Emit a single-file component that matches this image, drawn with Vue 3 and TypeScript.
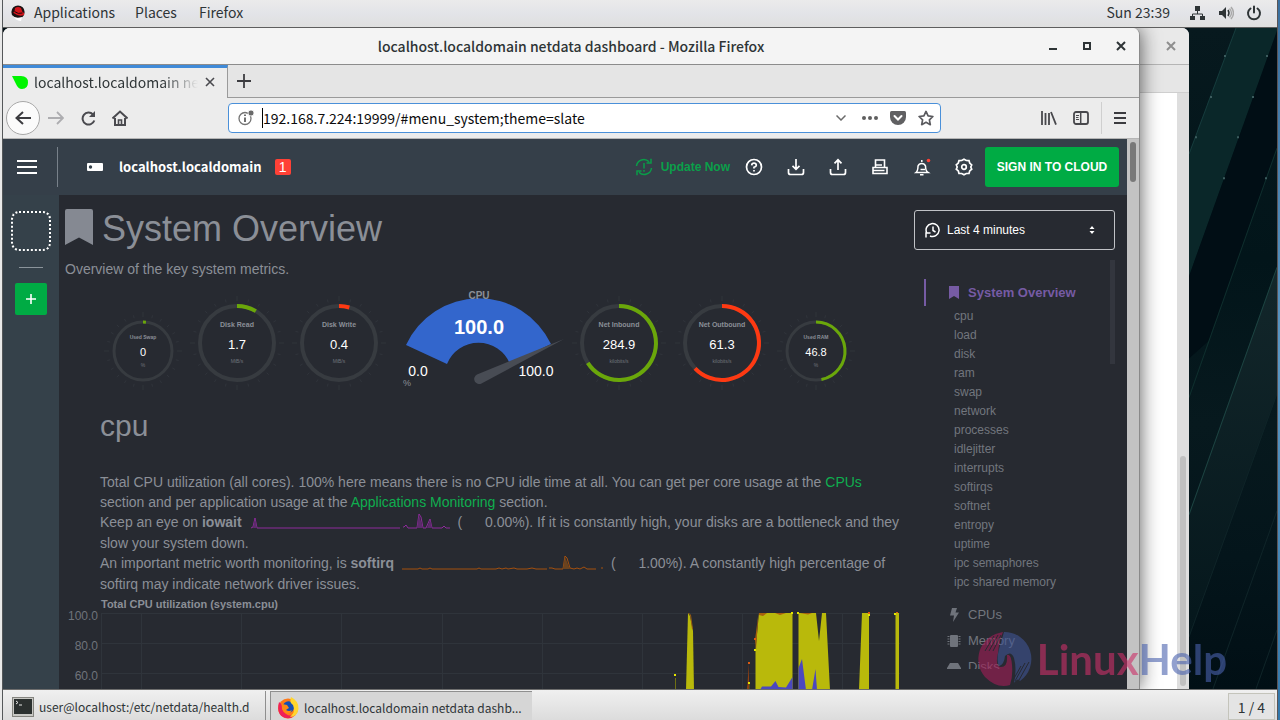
<script setup lang="ts">
import { ref } from 'vue'

interface Gauge {
  label: string
  value: string
  unit: string
  percent: number
  color: string
  radius: number
  width: number
}

const leftGauges: Gauge[] = [
  { label: 'Used Swap', value: '0', unit: '%', percent: 1.6, color: '#6aa70a', radius: 29, width: 86 },
  { label: 'Disk Read', value: '1.7', unit: 'MiB/s', percent: 8.5, color: '#6aa70a', radius: 37, width: 102 },
  { label: 'Disk Write', value: '0.4', unit: 'MiB/s', percent: 4.5, color: '#fe3912', radius: 37, width: 102 },
]
const rightGauges: Gauge[] = [
  { label: 'Net Inbound', value: '284.9', unit: 'kilobits/s', percent: 66, color: '#6aa70a', radius: 37, width: 102 },
  { label: 'Net Outbound', value: '61.3', unit: 'kilobits/s', percent: 63, color: '#fe3912', radius: 37, width: 104 },
  { label: 'Used RAM', value: '46.8', unit: '%', percent: 47, color: '#6aa70a', radius: 29, width: 84 },
]

const menuItems = [
  'cpu', 'load', 'disk', 'ram', 'swap', 'network', 'processes', 'idlejitter', 'interrupts',
  'softirqs', 'softnet', 'entropy', 'uptime', 'ipc semaphores', 'ipc shared memory',
]

const address = ref('192.168.7.224:19999/#menu_system;theme=slate')
const range = ref('Last 4 minutes')

const gaugeBottom = 94
const cy = (g: Gauge) => gaugeBottom - g.radius - 1

function arc(g: Gauge): string {
  const angle = (g.percent / 100) * Math.PI * 2
  const x = g.width / 2 + g.radius * Math.sin(angle)
  const y = cy(g) - g.radius * Math.cos(angle)
  return `M${g.width / 2} ${cy(g) - g.radius} A${g.radius} ${g.radius} 0 ${g.percent > 50 ? 1 : 0} 1 ${x.toFixed(2)} ${y.toFixed(2)}`
}

function ticks(g: Gauge): string {
  let d = ''
  for (let i = 0; i < 24; i++) {
    const a = (i * Math.PI) / 12
    const r1 = g.radius + 5
    const r2 = g.radius + (i % 6 === 0 ? 10 : 8)
    d += `M${(g.width / 2 + r1 * Math.sin(a)).toFixed(1)} ${(cy(g) - r1 * Math.cos(a)).toFixed(1)}L${(g.width / 2 + r2 * Math.sin(a)).toFixed(1)} ${(cy(g) - r2 * Math.cos(a)).toFixed(1)}`
  }
  return d
}
</script>

<template>
  <div class="screen">
    <div class="edge-left"></div>
    <div class="desktop">
      <header class="topbar">
        <nav class="topmenu">
          <svg class="hat" width="16" height="16" viewBox="0 0 16 16">
            <circle cx="8" cy="7" r="6.6" fill="#1b1212" />
            <path d="M2 10 Q5 14 12 12 L11 16 Q5 15.500 2 10z" fill="#fff" />
            <path d="M5 3 Q8 1 11 3 L12.500 7 Q15 8 14 10 Q9 12 3.500 8 Q3 6.500 4.500 6.500z" fill="#d3151c" />
            <path d="M4.500 6.500 Q8 9.500 12.500 8" stroke="#220808" fill="none" stroke-width="1" />
          </svg>
          <a href="#applications">Applications</a>
          <a href="#places">Places</a>
          <a href="#firefox">Firefox</a>
        </nav>
        <div class="status">
          <time>Sun 23:39</time>
          <svg width="16" height="16" viewBox="0 0 16 16" fill="#2e3436">
            <path d="M5 1h5v5H5zM0 11h5v4H0zM10 11h5v4h-5z" />
            <path d="M7.500 6v3M2.500 11V9h10v2" stroke="#2e3436" fill="none" />
          </svg>
          <svg width="16" height="16" viewBox="0 0 16 16">
            <path d="M1 6h3l4-4v12l-4-4H1z" fill="#2e3436" />
            <path d="M10 5q2 3 0 6" stroke="#2e3436" stroke-width="1.500" fill="none" />
            <path d="M11.500 3.500q4 4.500 0 9M13 2q5 6 0 12" stroke="#a9a9a9" stroke-width="1.400" fill="none" />
          </svg>
          <svg width="16" height="16" viewBox="0 0 16 16" stroke="#2e3436" fill="none" stroke-width="2" stroke-linecap="round">
            <path d="M4.500 3.500a6 6 0 1 0 7 0M8 1.500v6" />
          </svg>
        </div>
      </header>

      <main class="workspace">
        <svg class="wallpaper" viewBox="0 0 88 660" preserveAspectRatio="none">
          <defs>
            <linearGradient id="wall" x1="0" y1="0" x2="0" y2="1">
              <stop offset="0" stop-color="#07191e" />
              <stop offset=".35" stop-color="#02151a" />
              <stop offset=".6" stop-color="#07191e" />
              <stop offset=".8" stop-color="#04151b" />
              <stop offset="1" stop-color="#010f15" />
            </linearGradient>
            <linearGradient id="glow" x1="0" y1="0" x2="0" y2="1">
              <stop offset="0" stop-color="#13272b" />
              <stop offset="1" stop-color="#05171c" />
            </linearGradient>
          </defs>
          <rect width="88" height="660" fill="url(#wall)" />
          <path d="M47 0H88V3L0 248V126z" fill="#0a2729" />
          <path d="M88 3V120L20 312L0 330V248z" fill="#010e15" />
          <path d="M88 239V365L0 608V486z" fill="url(#glow)" />
          <path d="M47 0L0 126" stroke="#163c3d" fill="none" />
          <path d="M88 120L0 369" stroke="#0f2f2e" fill="none" />
          <path d="M88 239L0 486" stroke="#1d4442" fill="none" />
          <path d="M88 365L0 608M88 482L24 660M88 601L67 660" stroke="#0f2428" fill="none" />
          <path d="M35 27h2v2h-2zM77 27h2v2h-2zM21 68h2v2h-2zM63 68h2v2h-2zM6 108h2v2H6zM48 108h2v2h-2zM34 149h2v2h-2zM76 149h2v2h-2z" fill="#3c5c5e" />
        </svg>

        <section class="window back">
          <div class="titlebar">
            <svg width="10" height="10" viewBox="0 0 10 10"><path d="M1 1l8 8M9 1l-8 8" stroke="#8e8e8e" stroke-width="2" /></svg>
          </div>
          <div class="back-strip"></div>
          <div class="back-page"><div class="back-scroll"><div class="back-thumb"></div></div></div>
        </section>

        <section class="window front">
          <div class="titlebar">
            <h1 class="wintitle">localhost.localdomain netdata dashboard - Mozilla Firefox</h1>
            <div class="winbuttons">
              <button aria-label="Minimize"><svg width="10" height="10" viewBox="0 0 10 10"><path d="M1 8h8" stroke="#2e3436" stroke-width="2" /></svg></button>
              <button aria-label="Maximize"><svg width="10" height="10" viewBox="0 0 10 10"><path d="M2 2h6v6H2z" stroke="#2e3436" stroke-width="2" fill="none" /></svg></button>
              <button aria-label="Close"><svg width="10" height="10" viewBox="0 0 10 10"><path d="M1 1l8 8M9 1l-8 8" stroke="#2e3436" stroke-width="2" /></svg></button>
            </div>
          </div>

          <div class="tabs">
            <div class="tab">
              <svg width="16" height="14" viewBox="0 0 16 14"><path d="M0 1h9q7 0 7 6.500T10 14Q6 14 4 9z" fill="#00f500" /></svg>
              <span class="tabtext">localhost.localdomain netdata dashboard</span>
              <button aria-label="Close tab"><svg width="10" height="10" viewBox="0 0 10 10"><path d="M1 1l8 8M9 1l-8 8" stroke="#4a4a4f" stroke-width="1.600" /></svg></button>
            </div>
            <div class="tabrest">
              <button aria-label="New tab"><svg width="14" height="14" viewBox="0 0 14 14"><path d="M7 0v14M0 7h14" stroke="#3c3c40" stroke-width="1.800" /></svg></button>
            </div>
          </div>

          <div class="navbar">
            <div class="navleft">
              <button class="backbtn" aria-label="Back"><svg width="16" height="14" viewBox="0 0 16 14" fill="none" stroke="#3c3c40" stroke-width="2"><path d="M16 7H1.500M8 1L1.500 7L8 13" /></svg></button>
              <button aria-label="Forward"><svg width="16" height="14" viewBox="0 0 16 14" fill="none" stroke="#adadb0" stroke-width="1.800"><path d="M0 7h14.500M9 1l6 6-6 6" /></svg></button>
              <button aria-label="Reload"><svg width="16" height="16" viewBox="0 0 16 16" fill="none" stroke="#4a4a4f" stroke-width="2"><path d="M14.300 10.500A6 6 0 1 1 13 4.500" /><path d="M15 1v6H9z" fill="#4a4a4f" stroke="none" /></svg></button>
              <button aria-label="Home"><svg width="16" height="16" viewBox="0 0 16 16" fill="none" stroke="#4a4a4f" stroke-width="2"><path d="M0.500 8.500L8 1.500l7.500 7M3 8v7h10V8" /><path d="M6.500 15v-5h3v5" stroke-width="1.600" /></svg></button>
            </div>
            <div class="urlbar">
              <svg width="17" height="16" viewBox="0 0 17 16"><circle cx="7" cy="8.500" r="6" fill="none" stroke="#737373" stroke-width="1.300" /><path d="M7 7.500v4.500M7 4.500v1.600" stroke="#5f5f5f" stroke-width="1.800" /><circle cx="13" cy="3" r="3" fill="#6a6a6a" stroke="#fff" stroke-width=".8" /></svg>
              <span class="caret"></span>
              <input v-model="address" type="text" aria-label="Address" />
              <svg width="10" height="6" viewBox="0 0 10 6"><path d="M.500.500L5 5L9.500.500" fill="none" stroke="#6b6b6b" stroke-width="1.500" /></svg>
              <svg class="dots" width="16" height="4" viewBox="0 0 16 4" fill="#5f5f5f"><circle cx="2" cy="2" r="2" /><circle cx="8" cy="2" r="2" /><circle cx="14" cy="2" r="2" /></svg>
              <svg width="16" height="14" viewBox="0 0 16 14"><path d="M1.500 0h13Q16 0 16 1.500V6a8 8 0 0 1-16 0V1.500Q0 0 1.500 0z" fill="#606062" /><path d="M4.500 5l3.500 3.500L11.500 5" fill="none" stroke="#fff" stroke-width="2" stroke-linecap="round" /></svg>
              <svg width="16" height="16" viewBox="0 0 16 16"><path d="M8 1.400l2.100 4.500 4.800.6-3.500 3.400.9 4.800L8 12.300l-4.300 2.400.9-4.800L1.100 6.500l4.800-.6z" fill="none" stroke="#5a5a5e" stroke-width="1.700" stroke-linejoin="round" /></svg>
            </div>
            <div class="navright">
              <button aria-label="Library"><svg width="16" height="14" viewBox="0 0 16 14" stroke="#48484c" stroke-width="1.800" fill="none"><path d="M1 0v14M4.500 2v12M8 2v12M10 1l5 12.600" /></svg></button>
              <button aria-label="Sidebar"><svg width="16" height="14" viewBox="0 0 16 14" stroke="#48484c" fill="none"><rect x="1" y="1" width="14" height="12" rx="2" stroke-width="1.800" /><path d="M7.700 1v12" stroke-width="1.500" /><path d="M3 4.500h3M3 6.500h2.500M3 8.500h3" /></svg></button>
              <span class="navsep"></span>
              <button aria-label="Menu"><svg width="12" height="12" viewBox="0 0 12 12"><path d="M0 1h12M0 6h12M0 11h12" stroke="#3c3c40" stroke-width="2" /></svg></button>
            </div>
          </div>

          <div class="page">
            <div class="site">
              <header class="sitehead">
                <button class="burger" aria-label="Toggle spaces"><svg width="20" height="14" viewBox="0 0 20 14"><path d="M0 1h20M0 7h20M0 13h20" stroke="#fff" stroke-width="2" /></svg></button>
                <span class="vline"></span>
                <svg class="node" width="16" height="8" viewBox="0 0 16 8"><rect width="16" height="8" rx="1" fill="#fff" /><circle cx="3.500" cy="4" r="1.700" fill="#35414a" /></svg>
                <strong class="host">localhost.localdomain</strong>
                <span class="alarm">1</span>
                <div class="tools">
                  <a class="update" href="#update">
                    <svg width="18" height="18" viewBox="0 0 18 18" fill="none" stroke="#0a9c48" stroke-width="1.500"><path d="M1.500 8A7.300 7.300 0 0 1 14 3.800M16.500 10A7.300 7.300 0 0 1 4 14.200M16 .8V5h-4.500M2 17.200V13h4.500M9 5v5.500M9 12v1.800" /></svg>
                    Update Now
                  </a>
                  <button aria-label="Help"><svg viewBox="0 0 18 18"><circle cx="9" cy="9" r="7.500" /><path d="M6.700 7.300Q6.900 5.200 9 5.200t2.300 2Q11.300 8.500 9 9.300V10.600M9 12v1.600" /></svg></button>
                  <button aria-label="Import"><svg viewBox="0 0 18 18"><path d="M9 1v10M5.500 7.800L9 11.300l3.500-3.500M1.500 11v3.500q0 2 2 2h11q2 0 2-2V11" /></svg></button>
                  <button aria-label="Export"><svg viewBox="0 0 18 18"><path d="M9 12V2M5.500 5.300L9 1.800l3.500 3.500M1.500 11v3.500q0 2 2 2h11q2 0 2-2V11" /></svg></button>
                  <button aria-label="Print"><svg viewBox="0 0 18 18"><path d="M4.500 9.500V2h9v7.500M4.500 7H11M2 15.500V9.500h14v6zM2 12.500h11.500" stroke-width="1.600" /></svg></button>
                  <button aria-label="Alarms"><svg viewBox="0 0 18 18"><path d="M3 14.500q2-1.500 2-6.500a4 4 0 0 1 7.500 0q0 5 2.500 6.500zM7 16.800h3.500M8.800 2v2M7.500 11.500h4.500" stroke-width="1.500" /><circle cx="15.500" cy="2.500" r="1.800" fill="#ff4136" stroke="none" /></svg></button>
                  <button aria-label="Settings"><svg viewBox="0 0 18 18"><path d="M9 1.200l2.300 1.300 2.700.1.700 2.500 2 1.800L15.800 9l.9 2.200-2 1.700-.7 2.500-2.700.1L9 16.800l-2.300-1.300-2.700-.1-.7-2.500-2-1.700L2.200 9l-.9-2.200 2-1.700.7-2.500 2.700-.1z" /><circle cx="9" cy="9" r="2.300" /></svg></button>
                </div>
                <button class="signin">SIGN IN TO CLOUD</button>
              </header>

              <div class="sitebody">
                <aside class="spaces">
                  <div class="space"></div>
                  <div class="rule"></div>
                  <button class="plus" aria-label="Add space"><svg width="10" height="10" viewBox="0 0 10 10"><path d="M5 0v10M0 5h10" stroke="#fff" stroke-width="1.600" /></svg></button>
                </aside>

                <article class="content">
                  <h2 class="overview">
                    <svg width="28" height="36" viewBox="0 0 28 36"><path d="M2 0h24q2 0 2 2v34L14 28.500L0 36V2Q0 0 2 0z" fill="#858992" /></svg>
                    System Overview
                  </h2>
                  <p class="lead">Overview of the key system metrics.</p>

                  <div class="gauges">
                    <svg v-for="g in leftGauges" :key="g.label" :width="g.width" height="106" :viewBox="`0 0 ${g.width} 106`">
                      <path :d="ticks(g)" stroke="#30343b" />
                      <circle :cx="g.width / 2" :cy="cy(g)" :r="g.radius" fill="none" stroke="#373b40" :stroke-width="g.radius > 30 ? 4 : 3" />
                      <path :d="arc(g)" fill="none" :stroke="g.color" :stroke-width="g.radius > 30 ? 4 : 3" />
                      <text :x="g.width / 2" :y="cy(g) - (g.radius > 30 ? 16 : 12)" class="glabel" :class="{ small: g.radius < 30 }">{{ g.label }}</text>
                      <text :x="g.width / 2" :y="cy(g) + (g.radius > 30 ? 6 : 5)" class="gvalue" :class="{ small: g.radius < 30 }">{{ g.value }}</text>
                      <text :x="g.width / 2" :y="cy(g) + (g.radius > 30 ? 20 : 16)" class="gunit">{{ g.unit }}</text>
                    </svg>
                    <svg width="178" height="106" viewBox="0 0 178 106">
                      <path d="M16 58A80 80 0 0 1 161 57L120 77A34 34 0 0 0 57 77z" fill="#3366cc" />
                      <path d="M91.500 96.500L174 52L87 87.500A5 5 0 1 0 91.500 96.500z" fill="#484c54" />
                      <text x="89" y="12" class="ctitle">CPU</text>
                      <text x="89" y="47" class="cvalue">100.0</text>
                      <text x="28" y="89" class="cedge">0.0</text>
                      <text x="146" y="89" class="cedge">100.0</text>
                      <text x="17" y="99" class="cunit">%</text>
                    </svg>
                    <svg v-for="g in rightGauges" :key="g.label" :width="g.width" height="106" :viewBox="`0 0 ${g.width} 106`">
                      <path :d="ticks(g)" stroke="#30343b" />
                      <circle :cx="g.width / 2" :cy="cy(g)" :r="g.radius" fill="none" stroke="#373b40" :stroke-width="g.radius > 30 ? 4 : 3" />
                      <path :d="arc(g)" fill="none" :stroke="g.color" :stroke-width="g.radius > 30 ? 4 : 3" />
                      <text :x="g.width / 2" :y="cy(g) - (g.radius > 30 ? 16 : 12)" class="glabel" :class="{ small: g.radius < 30 }">{{ g.label }}</text>
                      <text :x="g.width / 2" :y="cy(g) + (g.radius > 30 ? 6 : 5)" class="gvalue" :class="{ small: g.radius < 30 }">{{ g.value }}</text>
                      <text :x="g.width / 2" :y="cy(g) + (g.radius > 30 ? 20 : 16)" class="gunit">{{ g.unit }}</text>
                    </svg>
                  </div>

                  <h3 class="cpu">cpu</h3>
                  <p class="about">
                    Total CPU utilization (all cores). 100% here means there is no CPU idle time at all. You can get per core usage at the <a href="#cpus">CPUs</a><br />
                    section and per application usage at the <a href="#apps">Applications Monitoring</a> section.<br />
                    Keep an eye on <b>iowait</b>
                    <svg class="spark" width="200" height="20" viewBox="0 0 200 20"><path d="M1 15L3 14L5 5L7 15H150M153 14h1L156 12L158 15H167L169 1L171 4L173 15H176L180 6L182 15H192L194 13L196 15H200" fill="none" stroke="#8e2b9c" /><path d="M3 15L5 6L7 15zM167 15L169 2L173 15zM177 15L180 7L182 15z" fill="#5c2b6b" /></svg>
                    (<span class="num">0.00</span>%). If it is constantly high, your disks are a bottleneck and they<br />
                    slow your system down.<br />
                    An important metric worth monitoring, is <b>softirq</b>
                    <svg class="spark" width="201" height="20" viewBox="0 0 201 20"><path d="M0 15H16L18 14L20 15H26L28 14L30 15H75L77 14L79 15H94L97 14L100 15L104 14L106 15L112 14L115 15H125L130 14L134 15H145M147 14h3L153 15H161L163 2L165 4L168 14L172 15L175 14L178 15L182 13L185 15H194M200 13v2" fill="none" stroke="#a5500e" /><path d="M161 15L163 3L168 15z" fill="#6b431f" /></svg>
                    (<span class="num">1.00</span>%). A constantly high percentage of<br />
                    softirq may indicate network driver issues.
                  </p>

                  <h4 class="charttitle">Total CPU utilization (system.cpu)</h4>
                  <div class="chart">
                    <div class="yaxis"><span>100.0</span><span>80.0</span><span>60.0</span></div>
                    <svg width="802" height="78" viewBox="100 612 802 78">
                      <path d="M101 613.500H900M101 643.500H900M101 673.500H900M101.500 613V690M141.500 613V690M241.500 613V690M341.500 613V690M442.500 613V690M542.500 613V690M642.500 613V690M742.500 613V690M842.500 613V690" stroke="#2f343b" fill="none" />
                      <path d="M686 690L688 613L690 616L693 631L694 690z" fill="#b9b90b" />
                      <path d="M688.500 613L690.500 615L692.500 629" stroke="#9a5d10" fill="none" />
                      <path d="M675.500 678V690M747 690L749 683V690" stroke="#6f6f13" fill="none" />
                      <path d="M747 690L749 663V690" fill="#8e3f12" />
                      <path d="M755.500 690V650L759 613H792.500V690zM798.500 690V613H816L819 641L822 613H826L830 690zM859 690L862 613H869V690zM895.500 690V613H899V690z" fill="#b9b90b" />
                      <path d="M759 613H767L763 616L759 615zM775 613H786L780 615zM800 613H812L808 614.500zM755 640L758.500 613L756 650z" fill="#a8600d" />
                      <path d="M760 690L762 686.500H771L775.500 681L778.500 687L786 687.500L792.500 677V690zM798.500 690V668L802 659L806 690zM812 690L815.500 669L817 690z" fill="#4b48c0" />
                      <path d="M674 674h2v2h-2zM748 682h2v2h-2zM754 649h2v2h-2zM791 612h2v2h-2zM797 612h2v2h-2zM868 614h2v2h-2zM894 613h2v2h-2z" fill="#e6e600" />
                      <path d="M748 662h2v2h-2zM754 638h2v2h-2zM868 612h2v2h-2zM896 612h2v1h-2z" fill="#dc5a12" />
                    </svg>
                  </div>
                </article>

                <aside class="side">
                  <div class="picker">
                    <svg width="16" height="16" viewBox="0 0 16 16" fill="none" stroke="#fff" stroke-width="1.500"><path d="M1.800 11A6.500 6.500 0 1 1 5 14M1 15.500V11h4.500M8 4.500V8.500L10.500 10" /></svg>
                    <select v-model="range" aria-label="Time range">
                      <option>Last 4 minutes</option>
                      <option>Last 15 minutes</option>
                    </select>
                    <svg class="updown" width="6" height="8" viewBox="0 0 6 8" fill="#fff"><path d="M3 0l2.500 3h-5zM3 8L.500 5h5z" /></svg>
                  </div>
                  <nav class="menu">
                    <div class="menulist">
                      <a class="active" href="#menu_system">
                        <svg width="10" height="13" viewBox="0 0 10 13"><path d="M0 0h10v13L5 10L0 13z" fill="#765ba4" /></svg>
                        System Overview
                      </a>
                      <div class="subitems">
                        <a v-for="item in menuItems" :key="item" :href="'#menu_' + item.replace(/ /g, '_')">{{ item }}</a>
                      </div>
                      <a class="group" href="#menu_cpus"><svg width="14" height="14" viewBox="0 0 14 14"><path d="M5 0h5L8.500 4.500H12L6 14L7 7.500H3z" fill="#6f737b" /></svg>CPUs</a>
                      <a class="group" href="#menu_memory"><svg width="14" height="14" viewBox="0 0 14 14"><rect x="3" y="1" width="8" height="12" rx="1" fill="#6f737b" /><path d="M1.500 2v10M12.500 2v10" stroke="#6f737b" stroke-width="2" stroke-dasharray="1 1.500" /></svg>Memory</a>
                      <a class="group" href="#menu_disks"><svg width="14" height="14" viewBox="0 0 14 14"><path d="M3 3h8l3 5v4H0V8z" fill="#6f737b" /></svg>Disks</a>
                    </div>
                    <div class="menuscroll"></div>
                  </nav>
                </aside>
              </div>
            </div>
            <div class="scroll"><div class="thumb"></div></div>
          </div>
        </section>

        <div class="brand">
          <svg width="56" height="56" viewBox="0 0 56 56">
            <path d="M22 2A27 27 0 0 0 8 46Q20 58 33 54Q36 46 35 34Q34 22 30 24Q31 37 23 36Q18 34 21 22Q22 10 26 1z" fill="#a31d57" />
            <path d="M27 1A27 27 0 0 1 43 50Q41 46 37 52Q40 38 37 27Q34 19 28 25Q27 34 22 35Q19 30 22 18z" fill="#3f5494" />
            <path d="M8 20L17 5M12 20L21 4M16 20L24 4M38 50L48 32M42 49L52 31M35 51L44 35" stroke="#272a31" stroke-width="1" />
          </svg>
          <span><span class="red">Linux</span><span class="blue">Help</span></span>
        </div>
      </main>

      <footer class="taskbar">
        <button class="task">
          <svg width="22" height="20" viewBox="0 0 22 20"><rect x=".5" y=".5" width="21" height="19" fill="#c8c8c4" stroke="#84847f" /><rect x="2" y="2" width="18" height="15" fill="#2b302f" /><path d="M4 4l2 1.500L4 7M7 8h3" stroke="#e6e6e6" fill="none" /></svg>
          user@localhost:/etc/netdata/health.d
        </button>
        <button class="task current">
          <svg width="22" height="22" viewBox="0 0 22 22">
            <circle cx="11" cy="11.500" r="10" fill="#ff7a18" />
            <path d="M2 5Q-1 17 7 20.500Q14 23 19 17Q13 20 9 17Q5 14 5 9Q4 6 2 5z" fill="#ef2158" />
            <circle cx="11.500" cy="10" r="5.800" fill="#164fb5" />
            <path d="M14 0Q22 4 21.500 12Q20 20 13 20Q19 15 16 8Q12 5 14 0z" fill="#ffd62e" />
            <path d="M5 7L10 8L12 11Q10 12 9 13Q12 15 15 13Q12 19 7 15Q4 12 5 7z" fill="#ff8a12" />
          </svg>
          localhost.localdomain netdata dashb...
        </button>
        <button class="pager">1 / 4</button>
      </footer>
    </div>
    <div class="edge-right"></div>
  </div>
</template>

<style>
body {
  margin: 0;
}
</style>

<style scoped>
* {
  box-sizing: border-box;
}
.screen {
  display: flex;
  height: 100vh;
  overflow: hidden;
  font-family: "Noto Sans CJK SC", "Noto Sans", sans-serif;
  font-size: 14px;
  line-height: 20px;
  color: #2e3436;
}
button {
  border: 0;
  padding: 0;
  background: none;
  font: inherit;
  color: inherit;
  display: flex;
  align-items: center;
  justify-content: center;
}
a {
  color: inherit;
  text-decoration: none;
}
svg {
  flex: none;
}
h1,
h2,
h3,
h4,
p {
  margin: 0;
  font-weight: normal;
}
.edge-left {
  width: 3px;
  background: #e9e9e9;
  border-right: 1px solid #55585a;
}
.edge-right {
  width: 3px;
  background: linear-gradient(#3a6f9f, #5a97c4 50%, #3377aa);
  border-left: 1px solid #5b5556;
}
.desktop {
  flex: 1;
  min-width: 0;
  display: flex;
  flex-direction: column;
}
.topbar {
  height: 28px;
  display: flex;
  justify-content: space-between;
  align-items: center;
  padding: 0 15px 2px 7px;
  background: linear-gradient(#ebebeb, #e3e4e8 50%, #dfdfdf);
  border-bottom: 1px solid #5e5e5e;
}
.topmenu,
.status {
  display: flex;
  align-items: center;
}
.topmenu a,
.status time {
  padding-bottom: 2px;
}
.hat {
  margin-right: 8px;
}
.topmenu a {
  margin-right: 22px;
}
.topmenu a:nth-of-type(1) {
  margin-right: 20px;
}
.status {
  gap: 12px;
}
.status time {
  margin-right: 8px;
}
.workspace {
  flex: 1;
  min-height: 0;
  position: relative;
  overflow: hidden;
  background: #04141a;
}
.wallpaper {
  position: absolute;
  right: 0;
  top: 0;
  width: 88px;
  height: 100%;
}
.window {
  position: absolute;
  left: 0;
  top: 0;
  bottom: 0;
  display: flex;
  flex-direction: column;
  border-radius: 7px 7px 0 0;
  overflow: hidden;
}
.back {
  right: 88px;
  background: #fff;
}
.front {
  right: 137px;
  background: #ececec;
  box-shadow: 0 0 20px rgba(0, 0, 0, 0.65);
  border-right: 1px solid #8a8a8a;
}
.titlebar {
  flex: none;
  height: 37px;
  display: flex;
  align-items: center;
  justify-content: flex-end;
  background: #f4f4f4;
  border-bottom: 1px solid #8c8c8c;
}
.back .titlebar {
  background: #e9e9e9;
  border-color: #b5b5b5;
  padding-right: 13px;
}
.back-strip {
  height: 28px;
  background: #e6e6e6;
  border-bottom: 1px solid #cfcfcf;
}
.back-page {
  flex: 1;
  display: flex;
  justify-content: flex-end;
}
.back-scroll {
  width: 12px;
  background: #dedede;
  display: flex;
  flex-direction: column;
  justify-content: flex-end;
  padding: 3px;
}
.back-thumb {
  height: 39%;
  border-radius: 3px;
  background: #c0c0c0;
}
.wintitle {
  flex: 1;
  text-align: center;
  font-size: 14px;
  font-weight: 500;
  padding: 0 0 1px 91px;
}
.winbuttons {
  display: flex;
  gap: 24px;
  padding-right: 13px;
}
.tabs {
  flex: none;
  height: 33px;
  display: flex;
}
.tab {
  width: 225px;
  border-top: 3px solid #3f8ad8;
  border-right: 1px solid #9a9a9a;
  background: #ececec;
  display: flex;
  align-items: center;
  padding: 0 12px 2px 9px;
}
.tabtext {
  flex: 1;
  margin: 0 7px 0 6px;
  overflow: hidden;
  white-space: nowrap;
  mask-image: linear-gradient(to right, #000 78%, transparent 100%);
}
.tabrest {
  flex: 1;
  background: #e5e5e5;
  border-bottom: 1px solid #9a9a9a;
  display: flex;
  padding-left: 9px;
}
.navbar {
  flex: none;
  height: 41px;
  display: flex;
  align-items: center;
  padding: 0 13px 0 3px;
  border-bottom: 1px solid #b5b5b5;
}
.navleft {
  flex: none;
  display: flex;
  align-items: center;
  gap: 16px;
  width: 222px;
}
.backbtn {
  width: 34px;
  height: 34px;
  border: 1px solid #a8a8a8;
  border-radius: 50%;
  background: #fbfbfb;
}
.backbtn + button {
  margin-left: -8px;
}
.urlbar {
  flex: 1;
  max-width: 713px;
  height: 30px;
  border: 1px solid #4a90d9;
  border-radius: 4px;
  background: #fff;
  display: flex;
  align-items: center;
  gap: 12px;
  padding: 0 6px 0 9px;
}
.caret {
  width: 1px;
  height: 20px;
  background: #000;
  margin: 0 -12px 0 -5px;
}
.urlbar input {
  flex: 1;
  min-width: 0;
  border: 0;
  outline: 0;
  padding: 0 0 1px;
  background: none;
  font: inherit;
  color: #0c0c0d;
}
.dots {
  margin-left: 4px;
}
.navright {
  flex: none;
  margin-left: auto;
  display: flex;
  align-items: center;
  gap: 16px;
}
.navsep {
  width: 1px;
  height: 32px;
  background: #cfcfcf;
  margin: 0 -4px;
}
.page {
  flex: 1;
  min-height: 0;
  display: flex;
}
.site {
  flex: 1;
  min-width: 0;
  display: flex;
  flex-direction: column;
  font-family: "Liberation Sans", Arial, sans-serif;
}
.scroll {
  width: 12px;
  background: #c3c3c3;
  padding: 3px 3px 0;
}
.thumb {
  height: 40px;
  border-radius: 3px;
  background: #797979;
}
.sitehead {
  flex: none;
  height: 56px;
  background: #353f49;
  display: flex;
  align-items: center;
  padding: 0 8px 0 14px;
  color: #fff;
}
.vline {
  width: 1px;
  height: 40px;
  background: #78818a;
  margin: 0 29px 0 20px;
}
.host {
  margin-left: 16px;
  font-family: "Noto Sans CJK SC", "Noto Sans", sans-serif;
  font-size: 13px;
}
.alarm {
  margin-left: 13px;
  width: 16px;
  height: 16px;
  line-height: 16px;
  text-align: center;
  border-radius: 2px;
  background: #ff4136;
}
.tools {
  flex: 1;
  display: flex;
  align-items: center;
  justify-content: flex-end;
  gap: 24px;
  padding-right: 12px;
}
.tools button svg {
  width: 18px;
  height: 18px;
  fill: none;
  stroke: #fff;
  stroke-width: 1.7;
}
.update {
  display: flex;
  align-items: center;
  gap: 8px;
  margin-right: -9px;
  color: #0aa04a;
  font-size: 12px;
  font-weight: bold;
}
.signin {
  width: 134px;
  height: 40px;
  border-radius: 3px;
  background: #00ab44;
  font-size: 12px;
  font-weight: bold;
}
.sitebody {
  flex: 1;
  min-height: 0;
  display: flex;
  background: #272a31;
}
.spaces {
  flex: none;
  width: 56px;
  background: #35414a;
  display: flex;
  flex-direction: column;
  align-items: center;
  padding-top: 16px;
}
.space {
  width: 40px;
  height: 40px;
  border: 2px dotted #fff;
  border-radius: 8px;
}
.rule {
  width: 24px;
  height: 1px;
  margin: 16px 0 15px;
  background: #8b949b;
}
.plus {
  width: 32px;
  height: 32px;
  border-radius: 2px;
  background: #00ab44;
}
.content {
  flex: 1;
  min-width: 0;
  overflow: hidden;
  padding-left: 6px;
  color: #8b8f97;
  white-space: nowrap;
}
.overview {
  display: flex;
  align-items: center;
  gap: 9px;
  padding-top: 14px;
  font-size: 36px;
  line-height: 40px;
}
.overview svg {
  margin: 0 0 4px;
}
.lead {
  margin-top: 10px;
  font-size: 14px;
  line-height: 20px;
}
.gauges {
  display: flex;
  margin: 8px 0 0 35px;
}
.gauges text {
  text-anchor: middle;
}
.glabel {
  fill: #8b8f97;
  font-size: 7px;
  font-weight: bold;
}
.glabel.small {
  font-size: 5px;
}
.gvalue {
  fill: #fff;
  font-size: 13px;
}
.gvalue.small {
  font-size: 11px;
}
.gunit {
  fill: #70747c;
  font-size: 5px;
}
.ctitle {
  fill: #8b8f97;
  font-size: 10px;
  font-weight: bold;
}
.cvalue {
  fill: #fff;
  font-size: 20px;
  font-weight: bold;
}
.cedge {
  fill: #fff;
  font-size: 14px;
}
.cunit {
  fill: #8b8f97;
  font-size: 9px;
}
.cpu {
  margin: 15px 0 0 35px;
  font-size: 30px;
  line-height: 36px;
}
.about {
  margin: 28px 0 0 35px;
  font-size: 14px;
  line-height: 20px;
}
.about a {
  color: #0fae4f;
}
.spark {
  margin: 0 4px 0 8px;
  vertical-align: -6px;
}
.num {
  display: inline-block;
  width: 50px;
  text-align: right;
}
.charttitle {
  margin: 3px 0 0 36px;
  font-size: 11px;
  line-height: 14px;
  font-weight: bold;
}
.chart {
  display: flex;
  align-items: flex-start;
  margin-top: 1px;
}
.yaxis {
  width: 33px;
  margin: -11px 2px 0 0;
  display: flex;
  flex-direction: column;
  align-items: flex-end;
  color: #6f737b;
  font-size: 12px;
  line-height: 30px;
}
.side {
  flex: none;
  width: 213px;
  display: flex;
  flex-direction: column;
  padding: 15px 12px 20px 0;
  color: #72767e;
}
.picker {
  flex: none;
  height: 40px;
  display: flex;
  align-items: center;
  gap: 6px;
  border: 1px solid #c0c2c6;
  border-radius: 3px;
  padding: 0 19px 0 10px;
}
.picker select {
  flex: 1;
  min-width: 0;
  appearance: none;
  border: 0;
  padding: 0;
  background: none;
  color: #fff;
  font-family: inherit;
  font-size: 12px;
}
.menu {
  flex: 1;
  min-height: 0;
  margin-top: 10px;
  display: flex;
  justify-content: space-between;
  overflow: hidden;
}
.menulist {
  padding: 19px 0 0 10px;
}
.menuscroll {
  width: 5px;
  height: 104px;
  background: #33363e;
}
.active {
  display: flex;
  align-items: center;
  gap: 9px;
  height: 27px;
  padding-left: 23px;
  border-left: 2px solid #765ba4;
  color: #765ba4;
  font-size: 13px;
  font-weight: bold;
}
.subitems {
  height: 286px;
  margin-bottom: 10px;
  padding-left: 30px;
  display: flex;
  flex-direction: column;
  font-size: 12px;
  line-height: 16px;
}
.subitems a {
  flex: 1;
  display: flex;
  align-items: center;
}
.group {
  display: flex;
  align-items: center;
  gap: 7px;
  height: 26px;
  padding-left: 23px;
  font-size: 13px;
}
.brand {
  position: absolute;
  right: 50px;
  bottom: 2px;
  display: flex;
  align-items: center;
  gap: 4px;
  opacity: 0.6;
  font-family: "Lato", sans-serif;
  font-size: 42px;
  font-weight: bold;
  line-height: 56px;
}
.red {
  color: #cc3068;
}
.blue {
  color: #4a62ae;
}
.taskbar {
  flex: none;
  height: 31px;
  display: flex;
  align-items: stretch;
  padding: 1px 2px 0 0;
  border-top: 1px solid #6d6d6d;
  background: linear-gradient(#f0f0f0, #dcdcdc);
}
.task {
  width: 263px;
  justify-content: flex-start;
  gap: 5px;
  padding: 3px 0 0 9px;
  border-right: 1px solid #8f8f8f;
  font-size: 12px;
  white-space: nowrap;
}
.task.current {
  margin-left: 4px;
  padding-left: 6px;
  width: 262px;
  background: #d6d6d6;
  border: 1px solid #8f8f8f;
  border-width: 1px 0 0 1px;
}
.pager {
  margin: 2px 0 0 auto;
  width: 47px;
  border: 1px solid #c4c4bb;
  background: #e4e4e4;
  font-size: 14px;
}
</style>
